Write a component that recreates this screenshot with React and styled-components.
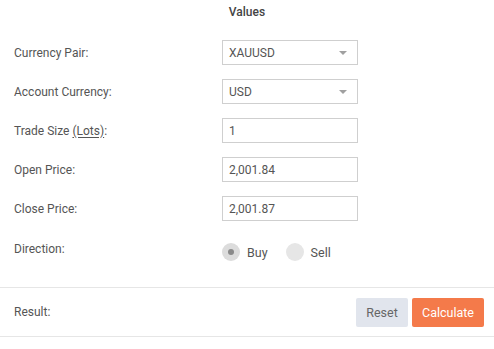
import React, { useState } from 'react';
import styled, { createGlobalStyle } from 'styled-components';

const GlobalStyle = createGlobalStyle`
  body {
    margin: 0;
    background: #fff;
    font-family: Roboto, 'Liberation Sans', sans-serif;
  }
`;

const Panel = styled.div`
  width: 494px;
  color: #555;
  font-size: 12px;
`;

const Title = styled.div`
  height: 33px;
  display: flex;
  align-items: center;
  justify-content: center;
  padding-bottom: 9px;
  box-sizing: border-box;
  font-weight: 500;
  font-size: 12px;
  color: #444;
`;

const Form = styled.div`
  padding: 0 0 11px 14px;
`;

const Row = styled.div`
  display: grid;
  grid-template-columns: 208px 136px;
  align-items: center;
  height: ${(p) => p.$height || 39}px;
`;

const Label = styled.label`
  color: #555;
  margin-top: ${(p) => p.$lift ? '-6px' : '0'};
`;

const Abbr = styled.span`
  text-decoration: underline;
  text-underline-offset: 2px;
`;

const Field = styled.div`
  position: relative;
  height: 25px;
  box-sizing: border-box;
  border: 1px solid #cfcfcf;
  display: flex;
  align-items: center;
  padding-left: 6px;
  color: #555;
`;

const Caret = styled.span`
  position: absolute;
  right: 10px;
  top: 10px;
  width: 0;
  height: 0;
  border-left: 4px solid transparent;
  border-right: 4px solid transparent;
  border-top: 4px solid #a0a0a0;
`;

const Radios = styled.div`
  display: flex;
  align-items: center;
  gap: 18px;
`;

const RadioOption = styled.div`
  display: flex;
  align-items: center;
  gap: 7px;
  cursor: pointer;
  color: #555;
  font-size: 12.5px;
`;

const Dot = styled.span`
  width: 18px;
  height: 18px;
  border-radius: 50%;
  background: ${(p) => (p.$checked ? '#dcdcdc' : '#e6e6e6')};
  display: flex;
  align-items: center;
  justify-content: center;
  &::after {
    content: '';
    width: 6px;
    height: 6px;
    border-radius: 50%;
    background: ${(p) => (p.$checked ? '#8a8a8a' : 'transparent')};
  }
`;

const ResultBar = styled.div`
  border-top: 1px solid #e6e6e6;
  border-bottom: 1px solid #e6e6e6;
  height: 50px;
  box-sizing: border-box;
  display: flex;
  align-items: center;
  justify-content: space-between;
  padding: 0 10px 0 14px;
`;

const Buttons = styled.div`
  display: flex;
  gap: 4px;
`;

const Button = styled.button`
  height: 29px;
  border: none;
  border-radius: 2px;
  padding: 0;
  width: ${(p) => p.$w}px;
  font-family: Roboto, 'Liberation Sans', sans-serif;
  font-size: 12.5px;
  cursor: pointer;
  background: ${(p) => (p.$primary ? '#f47a4a' : '#e1e5ed')};
  color: ${(p) => (p.$primary ? '#fff' : '#666')};
`;

export default function App() {
  const [dir, setDir] = useState('buy');

  return (
    <Panel>
      <GlobalStyle />
      <Title>Values</Title>
      <Form>
        <Row>
          <Label>Currency Pair:</Label>
          <Field>XAUUSD<Caret /></Field>
        </Row>
        <Row>
          <Label>Account Currency:</Label>
          <Field>USD<Caret /></Field>
        </Row>
        <Row>
          <Label>Trade Size <Abbr>(Lots)</Abbr>:</Label>
          <Field>1</Field>
        </Row>
        <Row>
          <Label>Open Price:</Label>
          <Field>2,001.84</Field>
        </Row>
        <Row>
          <Label>Close Price:</Label>
          <Field>2,001.87</Field>
        </Row>
        <Row $height={48}>
          <Label $lift>Direction:</Label>
          <Radios>
            <RadioOption onClick={() => setDir('buy')}>
              <Dot $checked={dir === 'buy'} />Buy
            </RadioOption>
            <RadioOption onClick={() => setDir('sell')}>
              <Dot $checked={dir === 'sell'} />Sell
            </RadioOption>
          </Radios>
        </Row>
      </Form>
      <ResultBar>
        <span>Result:</span>
        <Buttons>
          <Button $w={52}>Reset</Button>
          <Button $w={72} $primary>Calculate</Button>
        </Buttons>
      </ResultBar>
    </Panel>
  );
}
